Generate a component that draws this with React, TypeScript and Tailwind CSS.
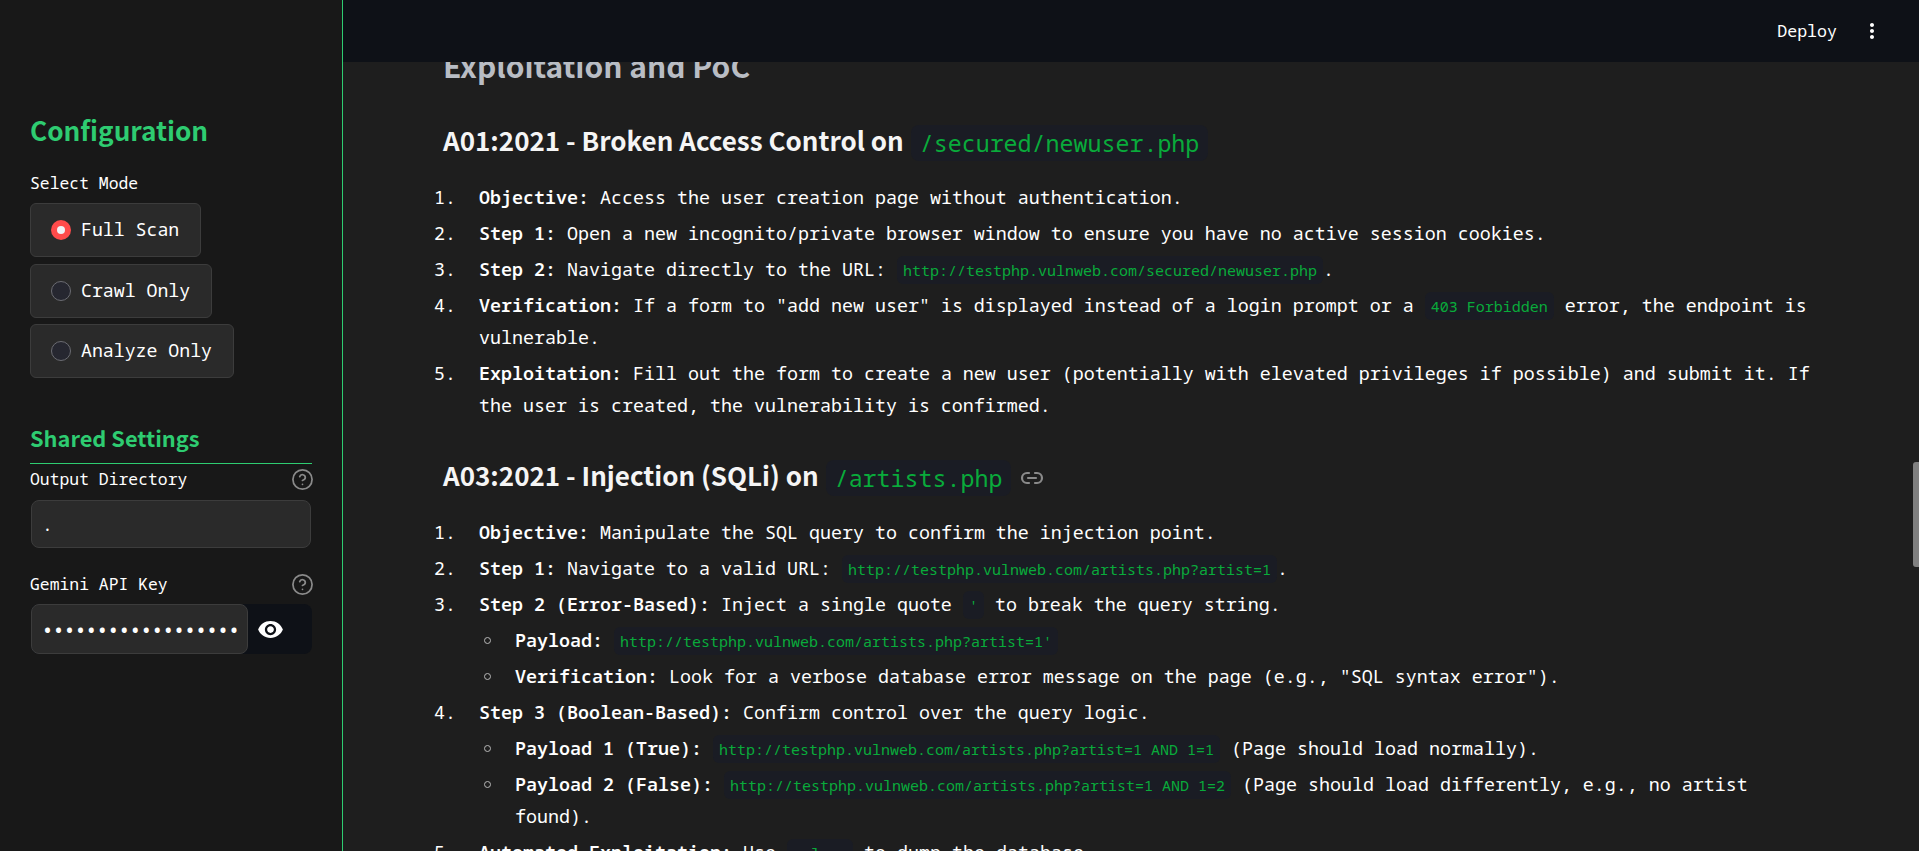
import { CircleHelp, Link2 } from "lucide-react";
import { MdVisibility, MdMoreVert } from "react-icons/md";

const mono = "font-['Noto_Sans_Mono','DejaVu_Sans_Mono',monospace]";
const sans = "font-['Noto_Sans_CJK_SC','Noto_Sans',sans-serif]";

function Code({ children }: { children: string }) {
  return (
    <code className="rounded-md bg-[#1a1c24] px-[6px] py-[4px] text-[15px] leading-none text-[#09ab3b] font-['Noto_Sans_Mono','DejaVu_Sans_Mono',monospace]">
      {children}
    </code>
  );
}

function HeadCode({ children }: { children: string }) {
  return (
    <code className="ml-[7px] mt-[4px] inline-block h-[36px] rounded-lg bg-[#1a1c24] px-[9px] align-middle text-[23.3px] font-normal leading-[37px] text-[#09ab3b] font-['Noto_Sans_Mono','DejaVu_Sans_Mono',monospace]">
      {children}
    </code>
  );
}

function Radio({ label, on }: { label: string; on?: boolean }) {
  return (
    <label className="flex h-[54px] w-fit items-center gap-[10px] rounded-md border border-[#3c3c3c] bg-[#2a2a2a] pl-[20px] pr-[21px] text-[18.2px] text-white">
      {on ? (
        <span className="flex h-[20px] w-[20px] items-center justify-center rounded-full bg-[#ff4b4b]">
          <span className="h-[8px] w-[8px] rounded-full bg-[#f0f2f6]" />
        </span>
      ) : (
        <span className="h-[20px] w-[20px] rounded-full border border-[#6b6c72] bg-[#262730]" />
      )}
      {label}
    </label>
  );
}

function FieldLabel({ label }: { label: string }) {
  return (
    <div className="flex h-[24px] items-center justify-between text-[16.4px] text-white">
      <span>{label}</span>
      <CircleHelp size={23} strokeWidth={1.8} className="mr-[-2px] text-[#8a8a8a]" />
    </div>
  );
}

function Item({ n, children }: { n: string; children: React.ReactNode }) {
  return (
    <li className="flex">
      <span className="w-[45px] shrink-0">{n}</span>
      <div className="min-w-0 flex-1">{children}</div>
    </li>
  );
}

function Sub({ children }: { children: React.ReactNode }) {
  return (
    <li className="mt-[4px] flex">
      <span className="flex h-[32px] w-[36px] shrink-0 items-center pl-[5px]">
        <span className="h-[7px] w-[7px] rounded-full border border-[#b8b8b8]" />
      </span>
      <div className="min-w-0 flex-1">{children}</div>
    </li>
  );
}

export default function App() {
  return (
    <div className={`flex h-screen w-full overflow-hidden bg-[#1e1e1e] ${mono}`}>
      <aside className="flex h-full w-[343px] shrink-0 flex-col border-r border-[#2ecc71] bg-[#181818] pl-[30px] pr-[30px] pt-[111px]">
        <h2 className={`h-[38px] text-[26.2px] font-semibold leading-[38px] text-[#2ecc71] ${sans}`}>Configuration</h2>
        <div className="mt-[22px] h-[24px] text-[16.4px] leading-[24px] text-white">Select Mode</div>
        <div className="mt-[8px] flex flex-col gap-[6.5px]">
          <Radio label="Full Scan" on />
          <Radio label="Crawl Only" />
          <Radio label="Analyze Only" />
        </div>
        <h3 className={`mt-[42px] h-[36px] text-[21.8px] font-semibold leading-[36px] text-[#2ecc71] ${sans}`}>Shared Settings</h3>
        <div className="mt-[7px] border-t border-[#2ecc71]" />
        <div className="mt-[3px]"><FieldLabel label="Output Directory" /></div>
        <div className="mx-[1px] mt-[9px] flex h-[48px] items-center rounded-lg border border-[#3c3c3c] bg-[#2a2a2a] px-[10px] text-[18px] text-white">.</div>
        <div className="mt-[24px]"><FieldLabel label="Gemini API Key" /></div>
        <div className="ml-[1px] mt-[8px] flex h-[50px] rounded-lg bg-[#0e1117]">
          <input
            type="password"
            readOnly
            value="AIzaSyD1234567890abcdefghijklmnop"
            className="h-full w-[217px] min-w-0 rounded-lg border border-[#3c3c3c] bg-[#2a2a2a] px-[10px] text-[18.3px] font-bold text-white outline-none"
          />
          <span className="flex flex-1 items-center pl-[9px] text-white">
            <MdVisibility size={27} />
          </span>
        </div>
      </aside>

      <main className="relative min-w-0 flex-1 overflow-hidden">
        <header className="absolute inset-x-0 top-0 z-10 flex h-[62px] items-center justify-end bg-[#0e1117] pr-[35px] text-white">
          <span className="text-[16.6px]">Deploy</span>
          <MdMoreVert size={24} className="ml-[23px]" />
        </header>

        <div className="pl-[100px] pr-[100px] pt-[43px] text-[18.33px] leading-[32px] text-white">
          <h2 className={`h-[44px] text-[30px] font-semibold leading-[44px] text-[#b9bdc4] ${sans}`}>Exploitation and PoC</h2>

          <h3 className={`mt-[34px] flex h-[40px] items-center text-[26px] font-semibold text-[#f5f5f5] ${sans}`}>
            <span className="mt-[-2px]">A01:2021 - Broken Access Control on</span> <HeadCode>/secured/newuser.php</HeadCode>
          </h3>
          <ol className="ml-[-9px] mt-[20px] flex flex-col gap-[4px]">
            <Item n="1."><b className="font-semibold">Objective:</b> Access the user creation page without authentication.</Item>
            <Item n="2."><b className="font-semibold">Step 1:</b> Open a new incognito/private browser window to ensure you have no active session cookies.</Item>
            <Item n="3."><b className="font-semibold">Step 2:</b> Navigate directly to the URL: <Code>http://testphp.vulnweb.com/secured/newuser.php</Code>.</Item>
            <Item n="4."><b className="font-semibold">Verification:</b> If a form to "add new user" is displayed instead of a login prompt or a <Code>403 Forbidden</Code> error, the endpoint is vulnerable.</Item>
            <Item n="5."><b className="font-semibold">Exploitation:</b> Fill out the form to create a new user (potentially with elevated privileges if possible) and submit it. If the user is created, the vulnerability is confirmed.</Item>
          </ol>

          <h3 className={`mt-[35px] flex h-[40px] items-center text-[26px] font-semibold text-[#f5f5f5] ${sans}`}>
            <span className="mt-[-2px]">A03:2021 - Injection (SQLi) on</span> <HeadCode>/artists.php</HeadCode>
            <Link2 size={24} strokeWidth={2.2} className="ml-[9px] mt-[4px] text-[#8a8a8a]" />
          </h3>
          <ol className="ml-[-9px] mt-[20px] flex flex-col gap-[4px]">
            <Item n="1."><b className="font-semibold">Objective:</b> Manipulate the SQL query to confirm the injection point.</Item>
            <Item n="2."><b className="font-semibold">Step 1:</b> Navigate to a valid URL: <Code>http://testphp.vulnweb.com/artists.php?artist=1</Code>.</Item>
            <Item n="3.">
              <b className="font-semibold">Step 2 (Error-Based):</b> Inject a single quote <Code>'</Code> to break the query string.
              <ul>
                <Sub><b className="font-semibold">Payload:</b> <Code>http://testphp.vulnweb.com/artists.php?artist=1'</Code></Sub>
                <Sub><b className="font-semibold">Verification:</b> Look for a verbose database error message on the page (e.g., "SQL syntax error").</Sub>
              </ul>
            </Item>
            <Item n="4.">
              <b className="font-semibold">Step 3 (Boolean-Based):</b> Confirm control over the query logic.
              <ul>
                <Sub><b className="font-semibold">Payload 1 (True):</b> <Code>http://testphp.vulnweb.com/artists.php?artist=1 AND 1=1</Code> (Page should load normally).</Sub>
                <Sub><b className="font-semibold">Payload 2 (False):</b> <Code>http://testphp.vulnweb.com/artists.php?artist=1 AND 1=2</Code> (Page should load differently, e.g., no artist found).</Sub>
              </ul>
            </Item>
            <Item n="5."><b className="font-semibold">Automated Exploitation:</b> Use <Code>sqlmap</Code> to dump the database.</Item>
          </ol>
        </div>

        <div className="absolute right-0 top-[462px] h-[105px] w-[6px] rounded-l-[3px] bg-[#808080]" />
      </main>
    </div>
  );
}
